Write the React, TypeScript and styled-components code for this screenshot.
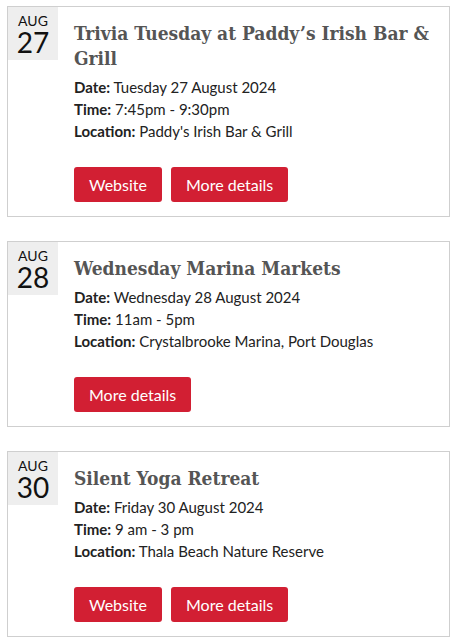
import React from 'react';
import styled, { createGlobalStyle } from 'styled-components';

const GlobalStyle = createGlobalStyle`
  * { box-sizing: border-box; }
  body {
    margin: 0;
    padding: 6px 6px 0 7px;
    background: #fff;
    font-family: Lato, 'Open Sans', sans-serif;
  }
`;

const List = styled.div`
  display: flex;
  flex-direction: column;
  gap: 24px;
`;

const Card = styled.article`
  display: flex;
  align-items: flex-start;
  gap: 16px;
  border: 1px solid #cfcfcf;
  padding: 0 16px 14px 0;
  background: #fff;
`;

const DateBox = styled.div`
  flex: 0 0 50px;
  height: 53px;
  background: #eeeeee;
  display: flex;
  flex-direction: column;
  align-items: center;
  padding-top: 6px;
  color: #111;
`;

const Month = styled.span`
  font-size: 14px;
  line-height: 16px;
  text-transform: uppercase;
`;

const Day = styled.span`
  font-size: 28px;
  line-height: 26px;
`;

const Body = styled.div`
  flex: 1;
  padding-top: 14px;
`;

const Title = styled.h2`
  margin: 0 0 5px;
  font-family: 'DejaVu Serif Condensed', 'DejaVu Serif', serif;
  font-stretch: condensed;
  font-weight: bold;
  font-size: 19px;
  line-height: 25px;
  color: #555;
`;

const Detail = styled.p`
  margin: 0;
  font-size: 15px;
  line-height: 22px;
  color: #222;
  b { font-weight: bold; }
`;

const Actions = styled.div`
  display: flex;
  gap: 9px;
  margin-top: 25px;
`;

const Button = styled.a`
  display: inline-flex;
  align-items: center;
  height: 35px;
  padding: 0 15px;
  background: #d21f33;
  color: #fff;
  border-radius: 3px;
  font-size: 16px;
  text-decoration: none;
`;

type Event = {
  month: string;
  day: string;
  title: string;
  date: string;
  time: string;
  location: string;
  website?: boolean;
};

const events: Event[] = [
  {
    month: 'Aug',
    day: '27',
    title: 'Trivia Tuesday at Paddy\u2019s Irish Bar & Grill',
    date: 'Tuesday 27 August 2024',
    time: '7:45pm - 9:30pm',
    location: "Paddy's Irish Bar & Grill",
    website: true,
  },
  {
    month: 'Aug',
    day: '28',
    title: 'Wednesday Marina Markets',
    date: 'Wednesday 28 August 2024',
    time: '11am - 5pm',
    location: 'Crystalbrooke Marina, Port Douglas',
  },
  {
    month: 'Aug',
    day: '30',
    title: 'Silent Yoga Retreat',
    date: 'Friday 30 August 2024',
    time: '9 am - 3 pm',
    location: 'Thala Beach Nature Reserve',
    website: true,
  },
];

export default function App() {
  return (
    <>
      <GlobalStyle />
      <List>
        {events.map((ev) => (
          <Card key={ev.day}>
            <DateBox>
              <Month>{ev.month}</Month>
              <Day>{ev.day}</Day>
            </DateBox>
            <Body>
              <Title>{ev.title}</Title>
              <Detail><b>Date:</b> {ev.date}</Detail>
              <Detail><b>Time:</b> {ev.time}</Detail>
              <Detail><b>Location:</b> {ev.location}</Detail>
              <Actions>
                {ev.website && <Button href="#">Website</Button>}
                <Button href="#">More details</Button>
              </Actions>
            </Body>
          </Card>
        ))}
      </List>
    </>
  );
}
